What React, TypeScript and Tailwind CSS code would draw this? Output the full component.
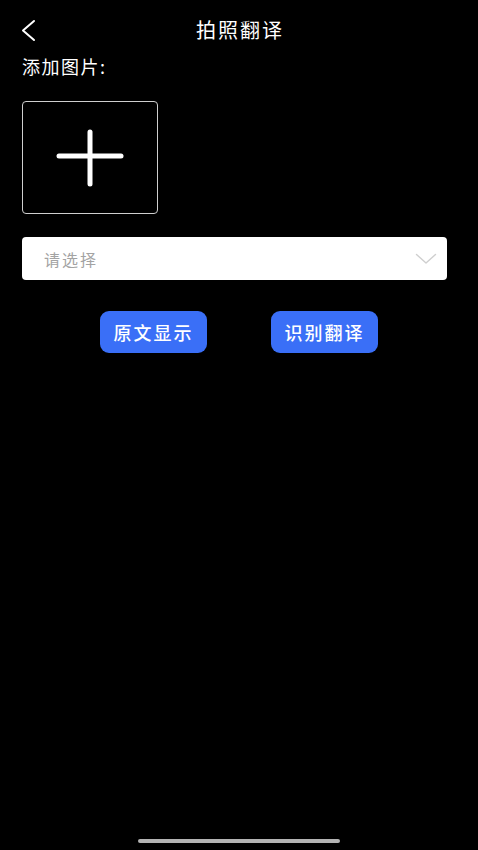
export default function App() {
  return (
    <div
      className="relative w-[478px] h-[850px] bg-black text-white overflow-hidden"
      style={{ fontFamily: '"Noto Sans CJK SC", "Noto Sans", sans-serif' }}
    >
      {/* header */}
      <div className="relative h-[60px] flex items-center justify-center">
        <svg className="absolute left-[18px] top-[18px]" width="22" height="26" viewBox="0 0 22 26">
          <polyline points="16,3 5,12.5 16,22" fill="none" stroke="white" strokeWidth="2" strokeLinecap="round" strokeLinejoin="round" />
        </svg>
        <span className="text-[20px] leading-none tracking-[2px] ml-[2px] -mt-[1px]">拍照翻译</span>
      </div>

      <div className="pl-[22px] pr-[31px]">
        <p className="text-[18px] leading-none tracking-[1.5px] -mt-[3px]">添加图片:</p>

        <button className="mt-[26px] w-[136px] h-[113px] border-[1.5px] border-[#cfcfcf] rounded-[4px] flex items-center justify-center">
          <svg width="68" height="58" viewBox="0 0 68 58">
            <line x1="3" y1="27" x2="65" y2="27" stroke="white" strokeWidth="5" strokeLinecap="round" />
            <line x1="34" y1="3" x2="34" y2="55" stroke="white" strokeWidth="5" strokeLinecap="round" />
          </svg>
        </button>

        <div className="mt-[23px] h-[43px] bg-white rounded-[4px] flex items-center justify-between pl-[22px] pr-[10px]">
          <span className="text-[16px] tracking-[2px] text-[#a3a3a3]">请选择</span>
          <svg width="22" height="12" viewBox="0 0 22 12">
            <polyline points="1.5,1.5 11,10 20.5,1.5" fill="none" stroke="#cfcfcf" strokeWidth="1.4" strokeLinecap="round" strokeLinejoin="round" />
          </svg>
        </div>
      </div>

      <div className="mt-[31px] flex justify-center gap-[64px]">
        <button className="w-[107px] h-[42px] rounded-[9px] bg-[#3a6ff7] text-white text-[18px] tracking-[2px] font-medium">原文显示</button>
        <button className="w-[107px] h-[42px] rounded-[9px] bg-[#3a6ff7] text-white text-[18px] tracking-[2px] font-medium">识别翻译</button>
      </div>

      <div className="absolute left-[138px] bottom-[7px] w-[202px] h-[4px] rounded-full bg-[#b3b3b3]" />
    </div>
  );
}
